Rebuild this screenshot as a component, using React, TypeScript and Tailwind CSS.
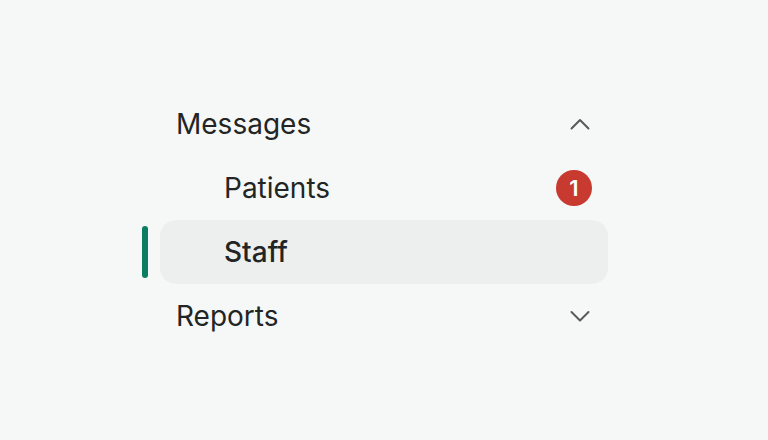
import React from "react";

const Chevron = ({ up }: { up?: boolean }) => (
  <svg width="24" height="24" viewBox="0 0 24 24" fill="none" stroke="#555b5a" strokeWidth="2" strokeLinecap="round" strokeLinejoin="round">
    {up ? <path d="M3.5 16.5l8.5-8.5 8.5 8.5" /> : <path d="M3.5 8l8.5 8.5 8.5-8.5" />}
  </svg>
);

export default function App() {
  return (
    <div className="w-[768px] h-[440px] bg-[#f6f8f7] flex items-center justify-center" style={{ fontFamily: "Inter, 'Noto Sans', sans-serif" }}>
      <div className="w-[448px] flex flex-col text-[#222524] text-[28px]">
        <div className="h-16 flex items-center justify-between pl-4 pr-4">
          <span>Messages</span>
          <Chevron up />
        </div>
        <div className="h-16 flex items-center justify-between pl-16 pr-4">
          <span>Patients</span>
          <span className="w-9 h-9 rounded-full bg-[#c8392f] text-white text-[22px] font-semibold flex items-center justify-center">1</span>
        </div>
        <div className="relative h-16 flex items-center pl-16 pr-4 bg-[#edefee] rounded-[16px]">
          <span className="absolute left-[-18px] top-[6px] w-[6px] h-[52px] rounded-full bg-[#0b7d63]" />
          <span className="font-medium">Staff</span>
        </div>
        <div className="h-16 flex items-center justify-between pl-4 pr-4">
          <span>Reports</span>
          <Chevron />
        </div>
      </div>
    </div>
  );
}
